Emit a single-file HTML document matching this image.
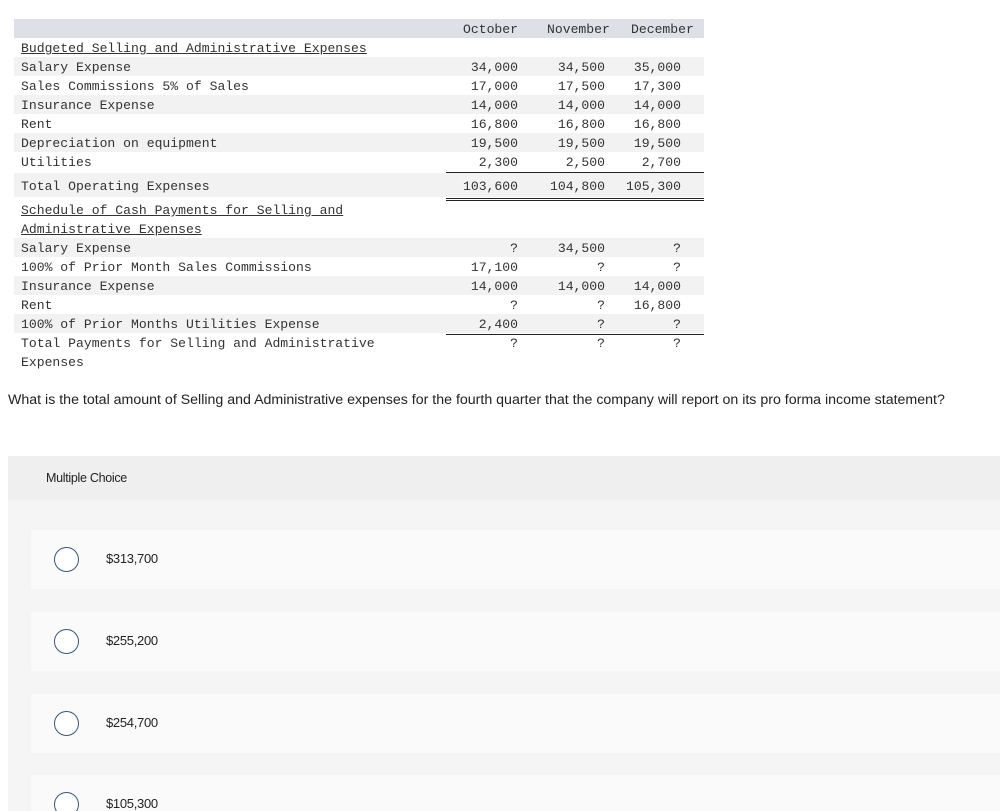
<!DOCTYPE html>
<html style="overflow:hidden"><head><meta charset="utf-8"><style>
html,body{overflow:hidden}
body{margin:0;width:1000px;height:811px;background:#fff;position:relative;font-family:"Liberation Sans",sans-serif}
.m{font-family:"Liberation Mono",monospace;font-size:13.1px;color:#333;position:absolute;white-space:pre;line-height:19px;margin-top:1px}
.band{position:absolute;left:14px;width:690px;height:19px;background:#f2f2f2}
.r{text-align:right;width:80px}
.ln{position:absolute;left:446px;width:258px;height:1px;background:#222}
.u{text-decoration:underline}
.opt{position:absolute;left:31px;width:969px;height:59px;background:#fafafa}
.c{position:absolute;left:23px;top:17px;width:25px;height:25px;border:1.3px solid #3a5675;border-radius:50%;box-sizing:border-box;background:#fff}
.ot{position:absolute;left:75px;top:21px;font-size:13px;color:#222;letter-spacing:-0.3px}
</style></head><body>
<div style="position:absolute;left:14px;top:19px;width:690px;height:19px;background:#dde0e7"></div>
<div class="band" style="top:57px"></div>
<div class="band" style="top:95px"></div>
<div class="band" style="top:133px"></div>
<div class="band" style="top:173px;height:24px"></div>
<div class="band" style="top:238px"></div>
<div class="band" style="top:276px"></div>
<div class="band" style="top:314px"></div>
<div class="m" style="left:463px;top:19px">October</div>
<div class="m" style="left:547px;top:19px">November</div>
<div class="m" style="left:631px;top:19px">December</div>
<div class="m u" style="left:21px;top:38px">Budgeted Selling and Administrative Expenses</div>
<div class="m" style="left:21px;top:57px">Salary Expense</div>
<div class="m" style="left:21px;top:76px">Sales Commissions 5% of Sales</div>
<div class="m" style="left:21px;top:95px">Insurance Expense</div>
<div class="m" style="left:21px;top:114px">Rent</div>
<div class="m" style="left:21px;top:133px">Depreciation on equipment</div>
<div class="m" style="left:21px;top:152px">Utilities</div>
<div class="m" style="left:21px;top:176px">Total Operating Expenses</div>
<div class="m r" style="left:438px;top:57px">34,000
17,000
14,000
16,800
19,500
 2,300</div>
<div class="m r" style="left:525px;top:57px">34,500
17,500
14,000
16,800
19,500
 2,500</div>
<div class="m r" style="left:601px;top:57px">35,000
17,300
14,000
16,800
19,500
 2,700</div>
<div class="ln" style="top:172px"></div>
<div class="m r" style="left:438px;top:176px">103,600</div>
<div class="m r" style="left:525px;top:176px">104,800</div>
<div class="m r" style="left:601px;top:176px">105,300</div>
<div class="ln" style="top:198px"></div><div class="ln" style="top:200px"></div>
<div class="m u" style="left:21px;top:200px">Schedule of Cash Payments for Selling and</div>
<div class="m u" style="left:21px;top:219px">Administrative Expenses</div>
<div class="m" style="left:21px;top:238px">Salary Expense
100% of Prior Month Sales Commissions
Insurance Expense
Rent
100% of Prior Months Utilities Expense
Total Payments for Selling and Administrative
Expenses</div>
<div class="m r" style="left:438px;top:238px">?
17,100
14,000
?
2,400
?</div>
<div class="m r" style="left:525px;top:238px">34,500
?
14,000
?
?
?</div>
<div class="m r" style="left:601px;top:238px">?
?
14,000
16,800
?
?</div>
<div class="ln" style="top:334px"></div>
<div style="position:absolute;left:8px;top:392px;font-size:14.2px;color:#222;white-space:nowrap">What is the total amount of Selling and Administrative expenses for the fourth quarter that the company will report on its pro forma income statement?</div>
<div style="position:absolute;left:8px;top:456px;width:992px;height:355px;background:#f5f5f5"></div>
<div style="position:absolute;left:8px;top:456px;width:992px;height:44px;background:#efefef"></div>
<div style="position:absolute;left:46px;top:471px;font-size:12.5px;color:#222;letter-spacing:-0.3px">Multiple Choice</div>
<div class="opt" style="top:530px"><div class="c"></div><div class="ot">$313,700</div></div>
<div class="opt" style="top:612px"><div class="c"></div><div class="ot">$255,200</div></div>
<div class="opt" style="top:694px"><div class="c"></div><div class="ot">$254,700</div></div>
<div class="opt" style="top:775px;height:36px"><div class="c"></div><div class="ot">$105,300</div></div>
</body></html>
